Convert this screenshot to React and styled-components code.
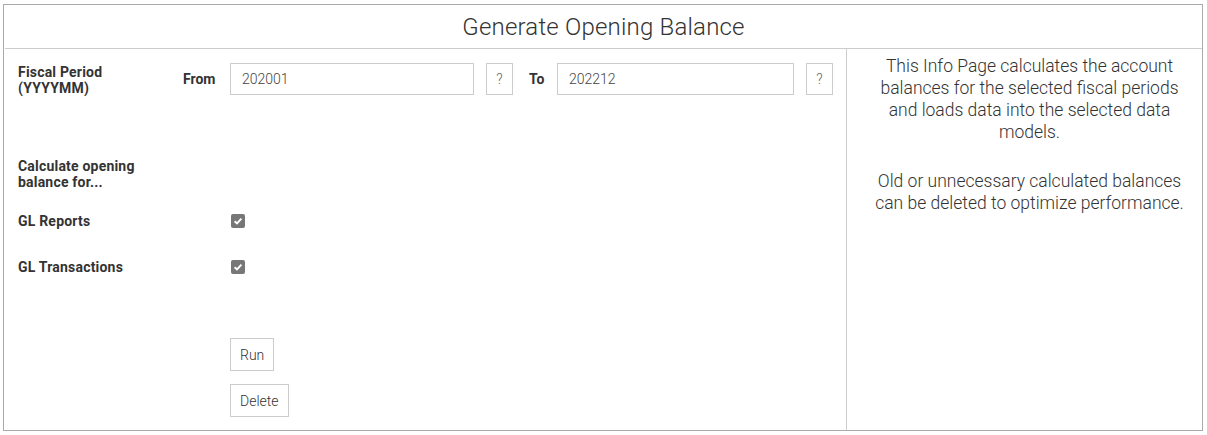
import React from 'react';
import styled, { createGlobalStyle } from 'styled-components';

const GlobalStyle = createGlobalStyle`
  body {
    margin: 0;
    background: #fff;
    font-family: Roboto, "Liberation Sans", sans-serif;
    color: #333;
  }
`;

function Check() {
  return (
    <CheckBox>
      <svg width="10" height="10" viewBox="0 0 10 10">
        <path d="M1.6 5.2 L4 7.5 L8.4 2.6" fill="none" stroke="#fff" strokeWidth="1.9" />
      </svg>
    </CheckBox>
  );
}

export default function App() {
  return (
    <>
      <GlobalStyle />
      <Frame>
        <Header>Generate Opening Balance</Header>
        <Body>
          <FormPanel>
            <Row>
              <Label>Fiscal Period<br />(YYYYMM)</Label>
              <Inline>
                <SubLabel width={47}>From</SubLabel>
                <Input defaultValue="202001" width={244} />
                <HelpButton>?</HelpButton>
                <SubLabel width={28}>To</SubLabel>
                <Input defaultValue="202212" width={237} />
                <HelpButton>?</HelpButton>
              </Inline>
            </Row>
            <Section>
              <Label>Calculate opening<br />balance for...</Label>
            </Section>
            <CheckRow first>
              <Label>GL Reports</Label>
              <Check />
            </CheckRow>
            <CheckRow>
              <Label>GL Transactions</Label>
              <Check />
            </CheckRow>
            <Actions>
              <ActionButton>Run</ActionButton>
              <ActionButton>Delete</ActionButton>
            </Actions>
          </FormPanel>
          <InfoPanel>
            <p>This Info Page calculates the account balances for the selected fiscal periods and loads data into the selected data models.</p>
            <p>Old or unnecessary calculated balances can be deleted to optimize performance.</p>
          </InfoPanel>
        </Body>
      </Frame>
    </>
  );
}

const Frame = styled.div`
  margin: 4px 0 0 3px;
  width: 1198px;
  height: 425px;
  border: 1px solid #aaa;
  display: flex;
  flex-direction: column;
`;

const Header = styled.div`
  height: 43px;
  margin-left: 1px;
  border-bottom: 1px solid #ccc;
  display: flex;
  align-items: center;
  justify-content: center;
  font-size: 24px;
  font-weight: 300;
  color: #333;
  letter-spacing: 0.2px;
`;

const Body = styled.div`
  flex: 1;
  display: flex;
`;

const FormPanel = styled.div`
  width: 828px;
  padding: 14px 0 0 14px;
  border-right: 1px solid #ccc;
  display: flex;
  flex-direction: column;
`;

const Row = styled.div`
  display: flex;
  align-items: flex-start;
`;

const Label = styled.div`
  width: 165px;
  flex-shrink: 0;
  font-size: 14px;
  font-weight: 700;
  line-height: 16px;
  color: #333;
  padding-top: 1px;
  letter-spacing: 0.2px;
`;

const Inline = styled.div`
  display: flex;
  align-items: center;
`;

const SubLabel = styled.span`
  width: ${({ width }) => width}px;
  flex-shrink: 0;
  font-size: 14px;
  font-weight: 700;
  color: #333;
`;

const Input = styled.input`
  width: ${({ width }) => width}px;
  height: 32px;
  box-sizing: border-box;
  border: 1px solid #ccc;
  padding: 0 11px;
  font-family: inherit;
  font-size: 14px;
  font-weight: 300;
  color: #444;
  outline: none;
  margin-right: 12px;
`;

const HelpButton = styled.button`
  width: 27px;
  height: 32px;
  box-sizing: border-box;
  border: 1px solid #ccc;
  background: #fff;
  color: #666;
  font-family: inherit;
  font-size: 14px;
  font-weight: 300;
  padding: 0;
  margin-right: 16px;
`;

const Section = styled.div`
  margin-top: 61px;
`;

const CheckRow = styled.div`
  display: flex;
  align-items: center;
  margin-top: ${({ first }) => (first ? '22px' : '29px')};
`;

const CheckBox = styled.span`
  width: 14px;
  height: 14px;
  margin-left: 48px;
  border-radius: 2px;
  background: #777;
  display: flex;
  align-items: center;
  justify-content: center;
`;

const Actions = styled.div`
  margin-top: 63px;
  margin-left: 212px;
  display: flex;
  flex-direction: column;
  align-items: flex-start;
  gap: 13px;
`;

const ActionButton = styled.button`
  height: 33px;
  box-sizing: border-box;
  padding: 0 9px;
  border: 1px solid #ccc;
  background: #fff;
  font-family: inherit;
  font-size: 14px;
  font-weight: 300;
  color: #333;
`;

const InfoPanel = styled.div`
  flex: 1;
  padding: 6px 8px 0 18px;
  text-align: center;
  font-size: 17.5px;
  font-weight: 300;
  line-height: 22px;
  color: #333;

  p {
    margin: 0 0 27px;
  }
`;
